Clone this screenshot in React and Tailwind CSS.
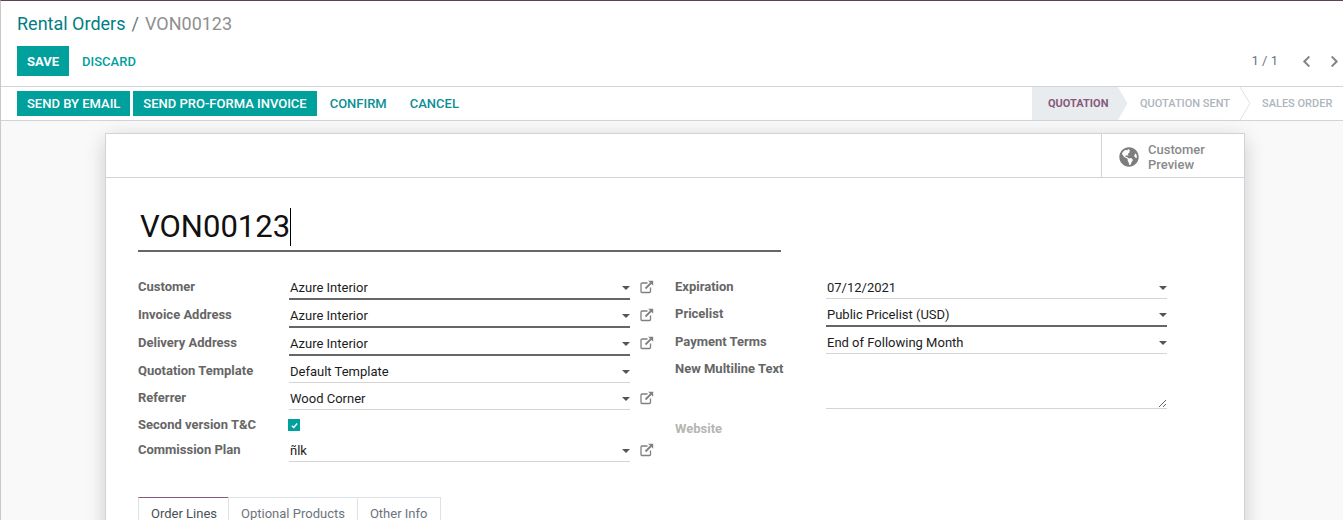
import React from "react";
import { FaGlobeAmericas, FaChevronLeft, FaChevronRight } from "react-icons/fa";

const Caret = () => (
  <span className="block w-0 h-0 border-x-[4px] border-x-transparent border-t-[4px] border-t-[#555] shrink-0" />
);

const ExtLink = () => (
  <svg width="14" height="14" viewBox="0 0 14 14" fill="none" className="block text-[#808080] shrink-0">
    <path d="M10.5 7.5v4a1 1 0 0 1-1 1h-7.5a1 1 0 0 1-1-1v-7.5a1 1 0 0 1 1-1h5.5" stroke="currentColor" strokeWidth="1.3" />
    <path d="M5.5 8.5 12 2" stroke="currentColor" strokeWidth="1.8" />
    <path d="M8.2 .8h5v5z" fill="currentColor" />
  </svg>
);

const Label = ({ children, muted }) => (
  <div className={`w-[151px] shrink-0 font-bold text-[13px] leading-[18px] ${muted ? "text-[#b5b5b5]" : "text-[#666666]"}`}>
    {children}
  </div>
);

const Field = ({ label, value, strong, link, h }) => (
  <div className="flex items-start" style={{ height: h }}>
    <Label>{label}</Label>
    <div className={`w-[341px] flex items-start justify-between pl-px ${strong ? "h-[22px] border-b-2 border-[#666666]" : "h-[21px] border-b border-[#d4d4d4]"} text-[13px] leading-[18px] text-[#1c1c1c]`}>
      <span className="pt-px">{value}</span>
      <span className="mt-[8px]"><Caret /></span>
    </div>
    {link && <span className="ml-[10px] mt-[2px]"><ExtLink /></span>}
  </div>
);

const Tab = ({ children, active, className }) => (
  <div className={`h-[23px] pl-3 pt-[7px] text-[13px] leading-[18px] border-l border-r border-t border-[#dee2e6] -mr-px ${active ? "text-[#495057] border-t-[#875a7b]" : "text-[#6c757d]"} ${className}`}>
    {children}
  </div>
);

export default function App() {
  return (
    <div className="h-[520px] overflow-hidden bg-[#f9f9f9] border-t border-t-[#5e4058] border-l border-l-[#c9c9c9] text-[13px]" style={{ fontFamily: 'Roboto, "Noto Sans", sans-serif' }}>
      <div className="bg-white h-[86px] border-b border-[#ced4da] pl-4 pr-[2px] pt-[11px]">
        <div className="flex items-center h-[24px] text-[18px] leading-[24px]">
          <span className="text-[#017e84]">Rental Orders</span>
          <span className="text-[#6c757d] mx-[6px]">/</span>
          <span className="text-[#8f8f8f]">VON00123</span>
        </div>
        <div className="flex items-center justify-between mt-[10px]">
          <div className="flex items-center">
            <button className="h-[30px] pt-px px-[10px] bg-[#00a09d] text-white font-bold text-[13px]">SAVE</button>
            <button className="h-[30px] pt-px ml-[3px] px-[10px] text-[#00a09d] font-medium text-[13px]">DISCARD</button>
          </div>
          <div className="flex items-center text-[#6c757d] text-[13px]">
            <span>1 / 1</span>
            <FaChevronLeft className="ml-[22px] text-[13px] text-[#858585]" />
            <FaChevronRight className="ml-[15px] text-[13px] text-[#858585]" />
          </div>
        </div>
      </div>

      <div className="bg-white h-[34px] border-b border-[#ced4da] flex items-center justify-between pl-4">
        <div className="flex items-center h-[25px] font-medium text-[13px]">
          <button className="h-[25px] px-[10px] bg-[#00a09d] text-white">SEND BY EMAIL</button>
          <button className="h-[25px] ml-[3px] px-[10px] bg-[#00a09d] text-white">SEND PRO-FORMA INVOICE</button>
          <button className="h-[25px] ml-[3px] px-[10px] text-[#0b8f95]">CONFIRM</button>
          <button className="h-[25px] ml-[3px] px-[10px] text-[#0b8f95]">CANCEL</button>
        </div>
        <div className="flex h-full text-[11px] font-medium">
          <div className="relative w-[86px] bg-[#e9ecef] pl-[16px] pt-[2px] flex items-center text-[#875a7b] font-bold">
            QUOTATION
            <svg className="absolute left-full top-0" width="10" height="33" viewBox="0 0 10 33"><path d="M0 0 9.5 16.5 0 33z" fill="#e9ecef" /></svg>
          </div>
          <div className="relative w-[122px] pl-[22px] pt-[2px] flex items-center text-[#adb5bd]">
            QUOTATION SENT
            <svg className="absolute left-full top-0" width="11" height="33" viewBox="0 0 11 33" fill="none"><path d="M0 0 10 16.5 0 33" stroke="#dee2e6" /></svg>
          </div>
          <div className="w-[103px] pl-[22px] pt-[2px] flex items-center text-[#adb5bd]">SALES ORDER</div>
        </div>
      </div>

      <div className="ml-[104px] mt-3 w-[1140px] h-[500px] bg-white border border-[#ced4da] shadow-[0_5px_20px_-1px_rgba(0,0,0,0.2)]">
        <div className="h-[44px] border-b border-[#ced4da] flex justify-end">
          <div className="w-[143px] border-l border-[#ced4da] flex items-center pt-[3px] pl-[17px] text-[#8a8a8a] font-medium text-[13px] leading-[15px]">
            <FaGlobeAmericas className="text-[20px] text-[#7d7d7d] mr-[9px] shrink-0" />
            <span>Customer<br />Preview</span>
          </div>
        </div>

        <div className="pl-[32px] pt-[28px]">
          <div className="w-[643px] h-[46px] border-b-2 border-[#666666] pl-[2px] flex items-start">
            <span className="text-[31px] leading-[42px] text-[#111111]">VON00123</span>
            <span className="w-px h-[38px] bg-black mt-[2px]" />
          </div>

          <div className="flex mt-[26px]">
            <div className="w-[537px]">
              <Field label="Customer" value="Azure Interior" strong link h={28} />
              <Field label="Invoice Address" value="Azure Interior" strong link h={28} />
              <Field label="Delivery Address" value="Azure Interior" strong link h={28} />
              <Field label="Quotation Template" value="Default Template" h={27} />
              <Field label="Referrer" value="Wood Corner" link h={27} />
              <div className="flex items-start h-[25px]">
                <Label>Second version T&amp;C</Label>
                <span className="w-3 h-3 mt-[3px] -ml-px bg-[#00a09d] flex items-center justify-center">
                  <svg width="7" height="7" viewBox="0 0 8 8" fill="none"><path d="M1 4.2 3.2 6.2 7 1.8" stroke="#fff" strokeWidth="1.6" /></svg>
                </span>
              </div>
              <Field label="Commission Plan" value="ñlk" link h={27} />
            </div>
            <div>
              <Field label="Expiration" value="07/12/2021" h={27} />
              <Field label="Pricelist" value="Public Pricelist (USD)" strong h={28} />
              <Field label="Payment Terms" value="End of Following Month" h={27} />
              <div className="flex items-start h-[60px]">
                <Label>New Multiline Text</Label>
                <textarea className="w-[341px] h-[49px] border-b border-[#d4d4d4] outline-none resize-y block" />
              </div>
              <Label muted>Website</Label>
            </div>
          </div>

          <div className="flex mt-[29px]">
            <Tab active className="pr-[11px]">Order Lines</Tab>
            <Tab className="pr-3">Optional Products</Tab>
            <Tab className="pr-[13px]">Other Info</Tab>
          </div>
        </div>
      </div>
    </div>
  );
}
